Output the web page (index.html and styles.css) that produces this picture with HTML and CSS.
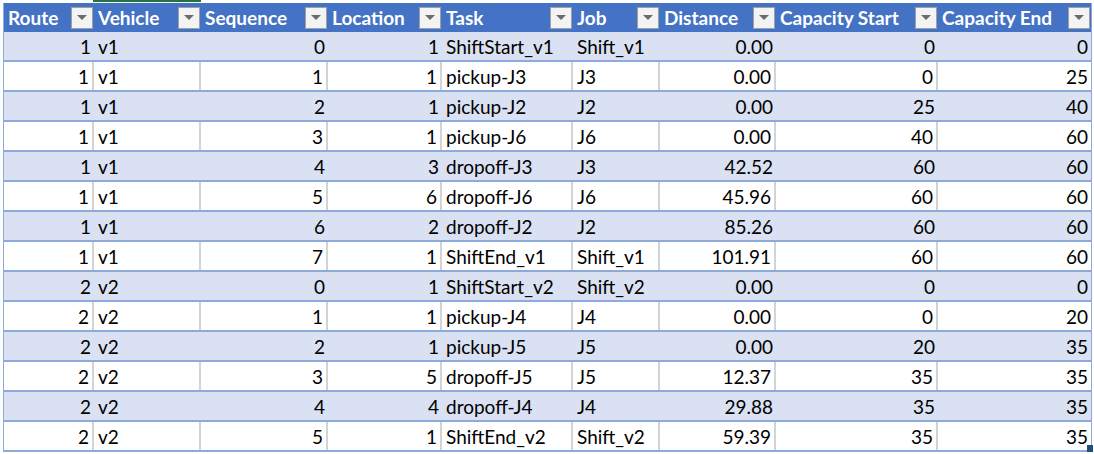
FILE: index.html
```html
<!DOCTYPE html>
<html>
<head>
<meta charset="utf-8">
<link rel="stylesheet" href="styles.css">
</head>
<body>
<div class="sheet">
  <div class="colbar"><span class="sel"></span></div>
  <div class="tbl">
    <div class="row head">
      <div class="hc"><span>Route</span><i class="flt"></i></div>
      <div class="hc"><span>Vehicle</span><i class="flt"></i></div>
      <div class="hc"><span>Sequence</span><i class="flt"></i></div>
      <div class="hc"><span>Location</span><i class="flt"></i></div>
      <div class="hc"><span>Task</span><i class="flt"></i></div>
      <div class="hc"><span>Job</span><i class="flt"></i></div>
      <div class="hc"><span>Distance</span><i class="flt"></i></div>
      <div class="hc"><span>Capacity Start</span><i class="flt"></i></div>
      <div class="hc"><span>Capacity End</span><i class="flt"></i></div>
    </div>
    <div class="row band"><div class="c n">1</div><div class="c">v1</div><div class="c n">0</div><div class="c n">1</div><div class="c">ShiftStart_v1</div><div class="c">Shift_v1</div><div class="c n">0.00</div><div class="c n">0</div><div class="c n">0</div></div>
    <div class="row"><div class="c n">1</div><div class="c">v1</div><div class="c n">1</div><div class="c n">1</div><div class="c">pickup-J3</div><div class="c">J3</div><div class="c n">0.00</div><div class="c n">0</div><div class="c n">25</div></div>
    <div class="row band"><div class="c n">1</div><div class="c">v1</div><div class="c n">2</div><div class="c n">1</div><div class="c">pickup-J2</div><div class="c">J2</div><div class="c n">0.00</div><div class="c n">25</div><div class="c n">40</div></div>
    <div class="row"><div class="c n">1</div><div class="c">v1</div><div class="c n">3</div><div class="c n">1</div><div class="c">pickup-J6</div><div class="c">J6</div><div class="c n">0.00</div><div class="c n">40</div><div class="c n">60</div></div>
    <div class="row band"><div class="c n">1</div><div class="c">v1</div><div class="c n">4</div><div class="c n">3</div><div class="c">dropoff-J3</div><div class="c">J3</div><div class="c n">42.52</div><div class="c n">60</div><div class="c n">60</div></div>
    <div class="row"><div class="c n">1</div><div class="c">v1</div><div class="c n">5</div><div class="c n">6</div><div class="c">dropoff-J6</div><div class="c">J6</div><div class="c n">45.96</div><div class="c n">60</div><div class="c n">60</div></div>
    <div class="row band"><div class="c n">1</div><div class="c">v1</div><div class="c n">6</div><div class="c n">2</div><div class="c">dropoff-J2</div><div class="c">J2</div><div class="c n">85.26</div><div class="c n">60</div><div class="c n">60</div></div>
    <div class="row"><div class="c n">1</div><div class="c">v1</div><div class="c n">7</div><div class="c n">1</div><div class="c">ShiftEnd_v1</div><div class="c">Shift_v1</div><div class="c n">101.91</div><div class="c n">60</div><div class="c n">60</div></div>
    <div class="row band"><div class="c n">2</div><div class="c">v2</div><div class="c n">0</div><div class="c n">1</div><div class="c">ShiftStart_v2</div><div class="c">Shift_v2</div><div class="c n">0.00</div><div class="c n">0</div><div class="c n">0</div></div>
    <div class="row"><div class="c n">2</div><div class="c">v2</div><div class="c n">1</div><div class="c n">1</div><div class="c">pickup-J4</div><div class="c">J4</div><div class="c n">0.00</div><div class="c n">0</div><div class="c n">20</div></div>
    <div class="row band"><div class="c n">2</div><div class="c">v2</div><div class="c n">2</div><div class="c n">1</div><div class="c">pickup-J5</div><div class="c">J5</div><div class="c n">0.00</div><div class="c n">20</div><div class="c n">35</div></div>
    <div class="row"><div class="c n">2</div><div class="c">v2</div><div class="c n">3</div><div class="c n">5</div><div class="c">dropoff-J5</div><div class="c">J5</div><div class="c n">12.37</div><div class="c n">35</div><div class="c n">35</div></div>
    <div class="row band"><div class="c n">2</div><div class="c">v2</div><div class="c n">4</div><div class="c n">4</div><div class="c">dropoff-J4</div><div class="c">J4</div><div class="c n">29.88</div><div class="c n">35</div><div class="c n">35</div></div>
    <div class="row"><div class="c n">2</div><div class="c">v2</div><div class="c n">5</div><div class="c n">1</div><div class="c">ShiftEnd_v2</div><div class="c">Shift_v2</div><div class="c n">59.39</div><div class="c n">35</div><div class="c n">35</div></div>
    <span class="handle"></span>
  </div>
</div>
</body>
</html>
```
FILE: styles.css
```css
html, body {
  margin: 0;
  padding: 0;
  background: #ffffff;
}
body {
  font-family: Lato, "Liberation Sans", sans-serif;
  font-size: 19px;
  color: #000;
}
.sheet {
  width: 1094px;
  height: 454px;
  overflow: hidden;
}
.colbar {
  height: 3px;
  display: flex;
}
.sel {
  margin-left: 93px;
  width: 108px;
  height: 2px;
  background: #217346;
}
.tbl {
  position: relative;
  margin-left: 3px;
  width: fit-content;
  border-left: 1px solid #8ea9db;
  border-right: 1px solid #8ea9db;
}
.row {
  display: grid;
  grid-template-columns: 90px 107px 127px 114px 131px 87px 116px 162px 153px;
  height: 30px;
  box-sizing: border-box;
  border-bottom: 2px solid #8ea9db;
  background: #ffffff;
}
.row.band {
  background: #d9e1f2;
}
.row.head {
  height: 29px;
  border-bottom: 0;
  background: #4472c4;
}
.hc {
  display: flex;
  align-items: center;
  justify-content: space-between;
  padding-left: 4px;
  color: #ffffff;
  font-weight: 700;
  white-space: nowrap;
}
.flt {
  position: relative;
  width: 22px;
  height: 22px;
  box-sizing: border-box;
  margin-right: 1px;
  background: #f3f3f3;
  border: 1px solid #a0a0a0;
  flex: none;
}
.flt::after {
  content: "";
  position: absolute;
  left: 5px;
  top: 7px;
  border-left: 5px solid transparent;
  border-right: 5px solid transparent;
  border-top: 5px solid #6b6b6b;
}
.c {
  display: flex;
  align-items: center;
  padding: 0 4px;
  white-space: nowrap;
  box-sizing: border-box;
}
.c.n {
  justify-content: flex-end;
  padding: 0 3px 0 0;
}
.row:not(.band):not(.head) .c {
  border-right: 2px solid #d4d4d4;
}
.row:not(.band):not(.head) .c:last-child {
  border-right: 0;
}
.handle {
  position: absolute;
  right: -2px;
  bottom: 0px;
  width: 6px;
  height: 7px;
  background: #1f4e79;
}
```
